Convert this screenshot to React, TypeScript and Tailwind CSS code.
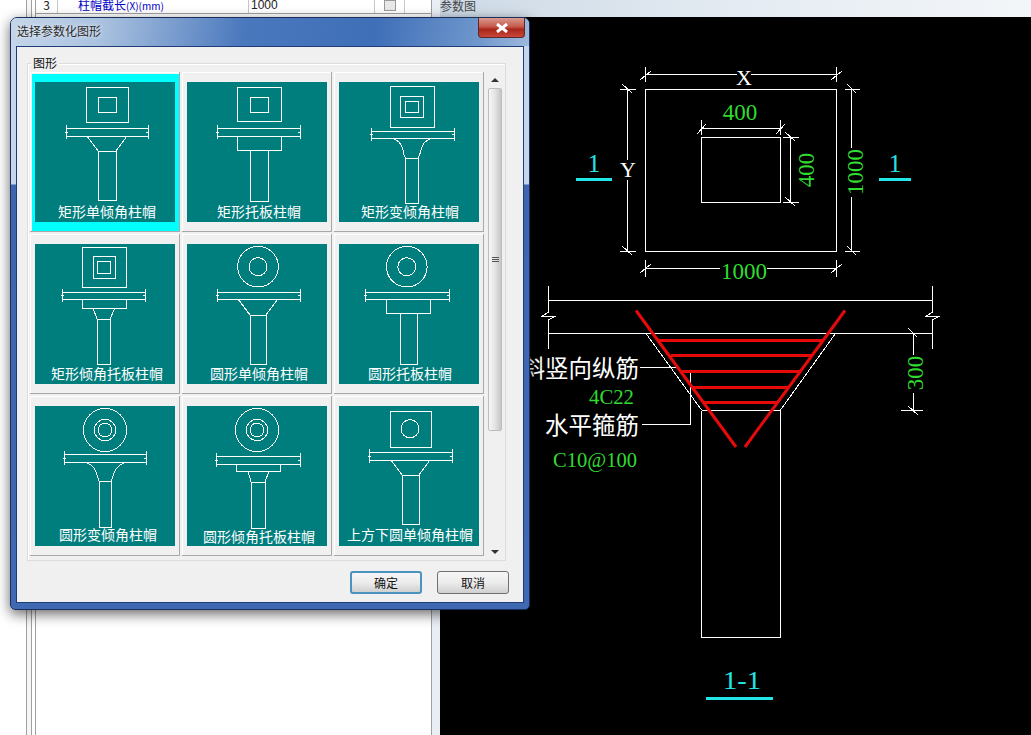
import React from "react";

type Box = [number, number, number, number];
type Cap = {
  label: string;
  lx: number;
  ly: number;
  rects: Box[];
  circles?: [number, number, number][];
  slab: Box;
  lines?: Box[];
  curves?: string[];
};

const caps: Cap[] = [
  {
    label: "矩形单倾角柱帽", lx: 72, ly: 129,
    rects: [[51, 5, 93, 40], [63, 15, 81, 30], [63, 69, 81, 118]],
    slab: [31, 113, 46, 54],
    lines: [[52, 54, 63, 69], [92, 54, 81, 69]],
  },
  {
    label: "矩形托板柱帽", lx: 72, ly: 129,
    rects: [[50, 5, 94, 39], [63, 15, 81, 30], [50, 54, 94, 68], [63, 68, 81, 119]],
    slab: [30, 113, 46, 54],
  },
  {
    label: "矩形变倾角柱帽", lx: 71, ly: 129,
    rects: [[51, 4, 95, 45], [61, 14, 84, 35], [66, 19, 79, 30], [66, 76, 79, 121]],
    slab: [32, 115, 49, 56],
    curves: ["M52.4 56.3 Q 62 58 64 68 Q 65 74 66.5 76", "M93.7 56.3 Q 84 58 82 68 Q 80.5 74 79.2 76"],
  },
  {
    label: "矩形倾角托板柱帽", lx: 72, ly: 129,
    rects: [[47, 3, 91, 43], [58, 12, 80, 34], [62, 17, 75, 29], [47, 55, 91, 64], [62, 75, 75, 120]],
    slab: [27, 110, 48, 55],
    lines: [[58, 64, 62, 75], [80, 64, 75, 75]],
  },
  {
    label: "圆形单倾角柱帽", lx: 72, ly: 129,
    rects: [[63, 71, 79, 120]],
    circles: [[71, 22.7, 20.3], [71, 22.7, 9]],
    slab: [30, 113, 48, 55],
    lines: [[51, 55, 63, 71], [91, 55, 79, 71]],
  },
  {
    label: "圆形托板柱帽", lx: 71, ly: 129,
    rects: [[47, 55, 91, 69], [61, 69, 78, 120]],
    circles: [[67.8, 22.7, 20.3], [67.8, 22.7, 9]],
    slab: [26, 110, 48, 55],
  },
  {
    label: "圆形变倾角柱帽", lx: 73, ly: 128,
    rects: [[64, 75, 76, 121]],
    circles: [[70, 24, 21.5], [70, 24, 10.7], [70, 24, 6.9]],
    slab: [29, 111, 48, 56],
    curves: ["M49.9 56.3 Q 58 58 61 66 L64 75", "M91.6 56.3 Q 83 58 79.5 66 L76.4 75"],
  },
  {
    label: "圆形倾角托板柱帽", lx: 72, ly: 130,
    rects: [[49, 58, 93, 65], [64, 76, 78, 122]],
    circles: [[70, 24, 21.5], [70, 24, 10.7], [70, 24, 6.9]],
    slab: [29, 113, 50, 58],
    lines: [[61, 65, 64, 76], [82, 65, 78, 76]],
  },
  {
    label: "上方下圆单倾角柱帽", lx: 71, ly: 128,
    rects: [[51, 5, 92, 41], [63, 69, 80, 118]],
    circles: [[71, 22.7, 9]],
    slab: [30, 113, 46, 54],
    lines: [[52, 54, 63, 69], [91, 54, 80, 69]],
  },
];

function CapIcon({ cap }: { cap: Cap }) {
  const [sx1, sx2, sy1, sy2] = cap.slab;
  const sm = (sy1 + sy2) / 2;
  return (
    <svg width="140" height="140" viewBox="0 0 140 140" className="block" fill="none" stroke="#ffffff" strokeWidth="1" shapeRendering="crispEdges">
      {cap.rects.map((r, i) => (
        <rect key={i} x={r[0]} y={r[1]} width={r[2] - r[0]} height={r[3] - r[1]} />
      ))}
      {cap.circles?.map((c, i) => <circle key={i} cx={c[0]} cy={c[1]} r={c[2]} />)}
      <rect x={sx1} y={sy1} width={sx2 - sx1} height={sy2 - sy1} />
      <path d={`M${sx1} ${sy1 - 3}V${sy2 + 3}M${sx2} ${sy1 - 3}V${sy2 + 3}M${sx1 - 1} ${sm}h3M${sx2 - 2} ${sm}h3`} />
      {cap.lines?.map((l, i) => <line key={i} x1={l[0]} y1={l[1]} x2={l[2]} y2={l[3]} />)}
      {cap.curves?.map((d, i) => <path key={i} d={d} />)}
      <text
        x={cap.lx}
        y={cap.ly}
        textAnchor="middle"
        dominantBaseline="central"
        fill="#ffffff"
        stroke="none"
        fontSize="14"
        fontFamily="'Noto Sans CJK SC', sans-serif"
        shapeRendering="auto"
      >
        {cap.label}
      </text>
    </svg>
  );
}

function Cell({ cap, selected }: { cap: Cap; selected?: boolean }) {
  return (
    <div className="relative w-[150px] h-[160px] pl-[5px] pt-[10px] border-r border-b border-[#a8a8a8] shadow-[inset_1px_1px_0_#ffffff]">
      {selected && <div className="absolute left-[2px] top-[2px] right-0 bottom-0 bg-[#00ffff]" />}
      <div className="relative w-[140px] h-[140px] bg-[#007d7d]">
        <CapIcon cap={cap} />
      </div>
    </div>
  );
}

function Scrollbar() {
  return (
    <div className="ml-[4px] w-[14px] flex flex-col">
      <div className="h-[16px] flex items-center justify-center">
        <div className="w-0 h-0 border-x-[4px] border-x-transparent border-b-[4px] border-b-[#333333]" />
      </div>
      <div className="h-[343px] rounded-[2px] border border-[#bdbdbd] bg-gradient-to-r from-[#f6f6f6] via-[#e4e4e4] to-[#c6c6c6] flex flex-col items-center justify-center gap-[1px]">
        <div className="w-[7px] h-[1px] bg-[#555555]" />
        <div className="w-[7px] h-[1px] bg-[#555555]" />
        <div className="w-[7px] h-[1px] bg-[#555555]" />
      </div>
      <div className="flex-1" />
      <div className="h-[16px] flex items-center justify-center">
        <div className="w-0 h-0 border-x-[4px] border-x-transparent border-t-[4px] border-t-[#333333]" />
      </div>
    </div>
  );
}

function Dialog() {
  return (
    <div className="absolute left-[10px] top-[17px] w-[520px] h-[593px] flex flex-col rounded-t-[7px] rounded-b-[5px] border border-[#1c2f5c] shadow-[0_4px_13px_rgba(0,0,0,0.6)] bg-[linear-gradient(to_bottom,#c3d6ec_0px,#c3d6ec_166px,#3d66ae_167px,#3f69b2_100%)] font-['Noto_Sans_CJK_SC',sans-serif]">
      <div className="h-[28px] flex items-start justify-between pl-[6px] pr-[4px] rounded-t-[6px] bg-[linear-gradient(100deg,#c5d6ea_0%,#a9c1df_18%,#4a78bd_45%,#3f6fb8_70%,#6f97cc_90%,#9db9dc_100%)]">
        <span className="mt-[5px] text-[12px] leading-[16px] text-[#2a2a2a] [text-shadow:0_0_4px_#ffffff]">选择参数化图形</span>
        <div className="w-[47px] h-[20px] flex items-center justify-center rounded-b-[4px] border border-t-0 border-[#5a2a2a] bg-[linear-gradient(to_bottom,#d99a90_0%,#c65a4c_45%,#a8271a_60%,#c9473a_100%)]">
          <svg width="14" height="10" viewBox="0 0 14 10">
            <path d="M2 1 L12 9 M12 1 L2 9" stroke="#ffffff" strokeWidth="3" />
          </svg>
        </div>
      </div>
      <div className="mx-[5px] mb-[6px] flex-1 flex flex-col bg-[#f0f0f0] border border-[#1f3c78] px-[10px] pt-[16px]">
        <div className="relative h-[498px] w-[479px] border border-[#dcdcdc] shadow-[inset_1px_1px_0_#ffffff] pl-[2px] pt-[8px] flex">
          <span className="absolute left-[3px] top-[-9px] bg-[#f0f0f0] px-[2px] text-[12px] leading-[16px] text-[#111111]">图形</span>
          <div className="grid grid-cols-[repeat(3,150px)] gap-x-[2px] auto-rows-[160px] gap-y-[2px] w-[454px]">
            {caps.map((c, i) => (
              <Cell key={c.label} cap={c} selected={i === 0} />
            ))}
          </div>
          <Scrollbar />
        </div>
        <div className="mt-[10px] flex justify-end gap-[15px] pr-[4px]">
          <button className="w-[72px] h-[23px] rounded-[3px] border-2 border-[#4a93bf] bg-gradient-to-b from-[#f6f6f6] via-[#ececec] to-[#d0d0d0] text-[12px] leading-[16px] text-[#111111]">确定</button>
          <button className="w-[72px] h-[23px] rounded-[3px] border border-[#707070] bg-gradient-to-b from-[#f6f6f6] via-[#ececec] to-[#d0d0d0] text-[12px] leading-[16px] text-[#111111]">取消</button>
        </div>
      </div>
    </div>
  );
}

function L({ d, c = "#ffffff", w = 1 }: { d: string; c?: string; w?: number }) {
  return <path d={d} stroke={c} strokeWidth={w} fill="none" shapeRendering="crispEdges" />;
}

function T({
  x, y, s, c, size = 23, rot, len, font = "'Liberation Serif', serif", anchor = "middle",
}: {
  x: number; y: number; s: string; c: string; size?: number; rot?: boolean; len?: number; font?: string; anchor?: "middle" | "end";
}) {
  return (
    <text
      x={x}
      y={y}
      fill={c}
      fontSize={size}
      fontFamily={font}
      textAnchor={anchor}
      dominantBaseline="central"
      transform={rot ? `rotate(-90 ${x} ${y})` : undefined}
      textLength={len}
      lengthAdjust={len ? "spacingAndGlyphs" : undefined}
    >
      {s}
    </text>
  );
}

const GREEN = "#2fdc2f";
const CYAN = "#22e6e6";
const RED = "#e60a0a";
const CJK = "'Noto Sans CJK SC', sans-serif";

function Drawing() {
  return (
    <svg viewBox="440 17 591 718" width="591" height="718" className="block">
      {/* plan */}
      <L d="M645.5 89.5H836.5V251.5H645.5Z" />
      <L d="M701.5 137.5H780.5V202.5H701.5Z" />
      <L d="M645.5 74.5H737M751 74.5H836.5M645.5 67V82M836.5 67V82M640 80L651 71M831 80L842 71" />
      <T x={744} y={77} s="X" c="#ffffff" size={22} />
      <L d="M627.5 89.5V160M627.5 180V251.5M620 89.5H636M620 251.5H636M622 84L632 93M622 246L632 255" />
      <T x={628} y={169} s="Y" c="#ffffff" size={22} />
      <L d="M851.5 89.5V148M851.5 197V251.5M845 89.5H860M845 251.5H860M847 84L856 93M847 246L856 255" />
      <T x={855} y={172} s="1000" c={GREEN} rot />
      <L d="M701.5 128.5H780.5M701.5 120V135M780.5 120V135M697 134L706 124M776 134L785 124" />
      <T x={740} y={112} s="400" c={GREEN} />
      <L d="M790.5 137.5V202.5M783 137.5H799M783 202.5H799M785 132L795 141M785 197L795 206" />
      <T x={806} y={170} s="400" c={GREEN} rot />
      <L d="M645.5 268.5H720M767 268.5H836.5M645.5 260V277M836.5 260V277M640 273L651 264M831 273L842 264" />
      <T x={744} y={271} s="1000" c={GREEN} />
      <T x={594} y={163} s="1" c={CYAN} size={25} />
      <path d="M576 179.5H612" stroke={CYAN} strokeWidth="3" shapeRendering="crispEdges" />
      <T x={895} y={163} s="1" c={CYAN} size={25} />
      <path d="M879 179.5H911" stroke={CYAN} strokeWidth="3" shapeRendering="crispEdges" />
      {/* section */}
      <L d="M548.5 300.5H932.5M548.5 333.5H932.5M548.5 286V312M548.5 320V349M932.5 286V312M932.5 320V349" />
      <L d="M548.5 312L542.5 316H555.5L548.5 320M932.5 312L926.5 316H939.5L932.5 320" />
      <L d="M646 333.5L701.5 410M835.5 333.5L780.5 410M701.5 410.5H780.5M701.5 410.5V637.5H780.5V410.5" />
      <L d="M640 367.5H677M642 424.5H690.5V373" />
      <L d="M913.5 333.5V355M913.5 393V410.5M901 410.5H923M908 328L917 337M908 406L918 415" />
      <T x={915} y={373} s="300" c={GREEN} rot />
      <g stroke={RED} strokeWidth="3" fill="none">
        <path d="M636 310.5L736 447M845 310.5L745 447" />
        <path d="M659 340.5H823M671 355.5H812M682 371.5H800M693 387.5H788M704 402.5H777" />
      </g>
      <T x={639} y={367} s="斜竖向纵筋" c="#ffffff" size={23.5} font={CJK} anchor="end" />
      <T x={634} y={397} s="4C22" c={GREEN} size={21} len={45} anchor="end" />
      <T x={639} y={424} s="水平箍筋" c="#ffffff" size={23.5} font={CJK} anchor="end" />
      <T x={637} y={460} s="C10@100" c={GREEN} size={21} len={84} anchor="end" />
      <T x={742} y={680} s="1-1" c={CYAN} size={26} len={38} />
      <path d="M706 698H773" stroke={CYAN} strokeWidth="3" shapeRendering="crispEdges" />
    </svg>
  );
}

export default function App() {
  return (
    <div className="relative w-[1031px] h-[735px] overflow-hidden flex bg-white font-['Noto_Sans_CJK_SC',sans-serif]">
      <div className="w-[440px] h-full flex">
        <div className="w-[26px]" />
        <div className="w-[5px] border-l border-[#a0a0a0] bg-[#f7f7f7]" />
        <div className="w-[4px] border-l border-[#a0a0a0] bg-white" />
        <div className="flex-1 border-x border-[#a0a0a0] bg-white">
          <div className="h-[14px] flex border-b border-[#a0a0a0] text-[12px] leading-[10px] overflow-hidden">
            <div className="w-[22px] border-r border-[#c8c8c8] text-center text-[#222222]">3</div>
            <div className="w-[191px] border-r border-[#c8c8c8] pl-[20px] text-[#0000c8] whitespace-nowrap">
              柱帽截长<span className="text-[10px]">(X)(mm)</span>
            </div>
            <div className="w-[126px] border-r border-[#c8c8c8] pl-[2px] text-[#222222] font-['Liberation_Sans',sans-serif]">1000</div>
            <div className="w-[30px] border-r border-[#c8c8c8] flex justify-center">
              <div className="w-[12px] h-[11px] border border-[#9a9a9a] bg-[#e8e8e8]" />
            </div>
          </div>
        </div>
        <div className="w-[8px] bg-[#e9edf4]" />
      </div>
      <div className="flex-1 h-full flex flex-col bg-black">
        <div className="h-[17px] bg-gradient-to-r from-[#ccd9e5] via-[#e4ebf2] to-[#f3f6f9] text-[12px] leading-[12px] text-[#444444] whitespace-nowrap">参数图</div>
        <Drawing />
      </div>
      <Dialog />
    </div>
  );
}
